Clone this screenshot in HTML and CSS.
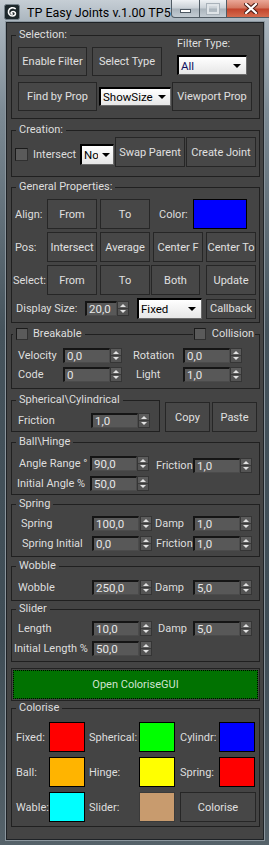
FILE: index.html
```html
<!DOCTYPE html>
<html lang="en">
<head>
  <meta charset="UTF-8">
  <meta name="viewport" content="width=device-width, initial-scale=1.0">
  <link rel="stylesheet" href="styles.css">
  <title>TP Easy Joints</title>
</head>
<body>
  <div class="window">
    <div class="titlebar">
      <svg class="app-icon" width="16" height="16" viewBox="0 0 16 16">
        <rect x="0.5" y="0.5" width="15" height="15" rx="2" fill="#1d282c" stroke="#77838c"/>
        <path d="M11.2 4.6 C9.4 3.2 5.4 3.4 4.6 6.6 C4 9.4 5.6 12 8.4 12 C10.8 12 12 10.2 11.2 8.6 C10.4 7.1 7.8 7 7.2 8.6 C6.8 9.6 7.6 10.2 8.4 10" fill="none" stroke="#fff" stroke-width="1.6" stroke-linecap="round"/>
      </svg>
      <span class="title">TP Easy Joints v.1.00 TP5</span>
      <div class="caption">
        <span class="cap cap-min"><i></i></span>
        <span class="cap cap-max"><i></i></span>
        <span class="cap cap-close">
          <svg width="14" height="11" viewBox="0 0 14 11">
            <path d="M2 1 L12 10 M12 1 L2 10" stroke="#4a1a12" stroke-width="4.2" stroke-linecap="square"/>
            <path d="M2 1 L12 10 M12 1 L2 10" stroke="#fff" stroke-width="2.2" stroke-linecap="square"/>
          </svg>
        </span>
      </div>
    </div>

    <div class="panel">
      <!-- Selection -->
      <div class="group sel">
        <span class="group-title">Selection:</span>
        <div class="row top">
          <button class="btn h29 w69">Enable Filter</button>
          <button class="btn h29 w70 ml5">Select Type</button>
          <div class="filter">
            <span class="filter-lbl">Filter Type:</span>
            <div class="dd dd-all">All</div>
          </div>
        </div>
        <div class="row mt6">
          <button class="btn h29 w79">Find by Prop</button>
          <div class="dd dd-show ml2">ShowSize</div>
          <button class="btn h29 w80 ml1">Viewport Prop</button>
        </div>
      </div>

      <!-- Creation -->
      <div class="group creation">
        <span class="group-title">Creation:</span>
        <div class="row">
          <span class="chk"></span>
          <span class="lbl w47 ml5">Intersect</span>
          <div class="dd dd-no"><span class="dd-text">No</span></div>
          <button class="btn w70 ml1">Swap Parent</button>
          <button class="btn w70 ml1">Create Joint</button>
        </div>
      </div>

      <!-- General Properties -->
      <div class="group general">
        <span class="group-title">General Properties:</span>
        <div class="row">
          <span class="rl">Align:</span>
          <button class="btn w50">From</button>
          <button class="btn w50 ml3">To</button>
          <span class="lbl w34 ml9">Color:</span>
          <span class="sw sw-color"></span>
        </div>
        <div class="row mt3">
          <span class="rl">Pos:</span>
          <button class="btn w50">Intersect</button>
          <button class="btn w50 ml3">Average</button>
          <button class="btn w50 ml3">Center F</button>
          <button class="btn w50 ml3">Center To</button>
        </div>
        <div class="row mt3">
          <span class="rl rl-sel">Select:</span>
          <button class="btn w50">From</button>
          <button class="btn w50 ml3">To</button>
          <button class="btn w49 ml1">Both</button>
          <button class="btn w50 ml6">Update</button>
        </div>
        <div class="row mt3 size-row">
          <span class="lbl size-lbl">Display Size:</span>
          <div class="spin spin-size"><span class="val">20,0</span><span class="arrows"></span></div>
          <div class="dd dd-fixed ml8">Fixed</div>
          <button class="btn btn-cb ml4">Callback</button>
        </div>
      </div>

      <!-- Breakable -->
      <div class="group breakable">
        <span class="group-title chk-title"><span class="chk"></span>Breakable</span>
        <span class="group-title right-title"><span class="chk"></span>Collision</span>
        <div class="row">
          <span class="lbl fl">Velocity</span>
          <div class="spin"><span class="val">0,0</span><span class="arrows"></span></div>
          <span class="lbl fr">Rotation</span>
          <div class="spin"><span class="val">0,0</span><span class="arrows"></span></div>
        </div>
        <div class="row mt4">
          <span class="lbl fl">Code</span>
          <div class="spin"><span class="val">0</span><span class="arrows"></span></div>
          <span class="lbl fr fr-light">Light</span>
          <div class="spin"><span class="val">1,0</span><span class="arrows"></span></div>
        </div>
      </div>

      <!-- Spherical\Cylindrical + copy/paste -->
      <div class="row top sph-row">
        <div class="group sph">
          <span class="group-title">Spherical\Cylindrical</span>
          <div class="row">
            <span class="lbl sph-lbl">Friction</span>
            <div class="spin"><span class="val">1,0</span><span class="arrows"></span></div>
          </div>
        </div>
        <button class="btn w45 ml5 mt2">Copy</button>
        <button class="btn w45 ml2 mt2">Paste</button>
      </div>

      <!-- Ball\Hinge -->
      <div class="group ball">
        <span class="group-title">Ball\Hinge</span>
        <div class="row top">
          <div class="col">
            <div class="row">
              <span class="lbl bl">Angle Range °</span>
              <div class="spin"><span class="val">90,0</span><span class="arrows"></span></div>
            </div>
            <div class="row mt5">
              <span class="lbl bl bl2">Initial Angle %</span>
              <div class="spin"><span class="val">50,0</span><span class="arrows"></span></div>
            </div>
          </div>
          <div class="row mt2 ml7">
            <span class="lbl w37">Friction</span>
            <div class="spin"><span class="val">1,0</span><span class="arrows"></span></div>
          </div>
        </div>
      </div>

      <!-- Spring -->
      <div class="group spring">
        <span class="group-title">Spring</span>
        <div class="row">
          <span class="lbl sl pl9">Spring</span>
          <div class="spin gap1"><span class="val">100,0</span><span class="arrows"></span></div>
          <span class="lbl sr">Damp</span>
          <div class="spin"><span class="val">1,0</span><span class="arrows"></span></div>
        </div>
        <div class="row mt5">
          <span class="lbl sl pl10">Spring Initial</span>
          <div class="spin gap1"><span class="val">0,0</span><span class="arrows"></span></div>
          <span class="lbl sr pl1">Friction</span>
          <div class="spin"><span class="val">1,0</span><span class="arrows"></span></div>
        </div>
      </div>

      <!-- Wobble -->
      <div class="group wobble">
        <span class="group-title">Wobble</span>
        <div class="row">
          <span class="lbl sl pl6">Wobble</span>
          <div class="spin gap1"><span class="val">250,0</span><span class="arrows"></span></div>
          <span class="lbl sr">Damp</span>
          <div class="spin"><span class="val">5,0</span><span class="arrows"></span></div>
        </div>
      </div>

      <!-- Slider -->
      <div class="group slider">
        <span class="group-title">Slider</span>
        <div class="row">
          <span class="lbl sl pl6">Length</span>
          <div class="spin gap1"><span class="val">10,0</span><span class="arrows"></span></div>
          <span class="lbl sr pl3">Damp</span>
          <div class="spin"><span class="val">5,0</span><span class="arrows"></span></div>
        </div>
        <div class="row mt5">
          <span class="lbl sl pl2">Initial Length %</span>
          <div class="spin gap1"><span class="val">50,0</span><span class="arrows"></span></div>
        </div>
      </div>

      <div class="gui">
        <button class="gui-btn">Open ColoriseGUI</button>
      </div>

      <!-- Colorise -->
      <div class="group colorise">
        <span class="group-title">Colorise</span>
        <div class="row">
          <span class="lbl cl">Fixed:</span>
          <span class="sw red"></span>
          <span class="lbl w50 ml4">Spherical:</span>
          <span class="sw green"></span>
          <span class="lbl w39 ml5">Cylindr:</span>
          <span class="sw blue"></span>
        </div>
        <div class="row mt5">
          <span class="lbl cl">Ball:</span>
          <span class="sw orange"></span>
          <span class="lbl w50 ml4">Hinge:</span>
          <span class="sw yellow"></span>
          <span class="lbl w39 ml5">Spring:</span>
          <span class="sw red"></span>
        </div>
        <div class="row mt5">
          <span class="lbl cl">Wable:</span>
          <span class="sw cyan"></span>
          <span class="lbl w50 ml4">Slider:</span>
          <span class="sw tan"></span>
          <button class="btn w76 ml5">Colorise</button>
        </div>
      </div>
    </div>
  </div>
</body>
</html>
```

FILE: styles.css
```css
body {
  margin: 0;
  font-family: Roboto, "Liberation Sans", sans-serif;
  font-size: 11px;
  color: #dedede;
  background: #3b4a53;
}

.window {
  width: 269px;
  height: 845px;
  overflow: hidden;
  background: linear-gradient(to bottom, #c6ced5 0, #aab5be 22px, #7d8b95 110px, #45535c 330px, #3f4d56 640px, #55626a 845px);
}

/* title bar */
.titlebar {
  height: 22px;
  display: flex;
  align-items: flex-start;
}

.app-icon {
  margin: 4px 0 0 4px;
  flex: none;
}

.title {
  margin: 5px 0 0 7px;
  font-size: 12.5px;
  line-height: 15px;
  color: #000;
  white-space: nowrap;
}

.caption {
  margin-left: auto;
  margin-right: 3px;
  display: flex;
}

.cap {
  height: 18px;
  box-sizing: border-box;
  display: flex;
  align-items: center;
  justify-content: center;
  border: 1px solid #515c65;
  border-top: none;
}

.cap-min,
.cap-max {
  background: linear-gradient(#eef1f4, #c9d0d6 48%, #aab4bc 52%, #c4ccd3);
}

.cap-min {
  width: 29px;
  border-radius: 0 0 0 4px;
}

.cap-min i {
  width: 9px;
  height: 2px;
  margin-top: 4px;
  background: #fff;
  border: 1px solid #4d5862;
}

.cap-max {
  width: 27px;
  border-left: none;
}

.cap-max i {
  width: 8px;
  height: 6px;
  border: 2px solid #dfe4e8;
  outline: 1px solid #a9b2ba;
}

.cap-close {
  width: 49px;
  border-left: none;
  border-radius: 0 0 4px 0;
  background: linear-gradient(#eaa898, #d3765f 48%, #c2432b 52%, #d56b4d);
}

/* main panel */
.panel {
  margin: 0 5px 0 6px;
  height: 818px;
  box-sizing: border-box;
  background: #444;
  border: 1px solid #1e2226;
  box-shadow: 0 0 0 1px #8b969e;
  padding: 0 2px 0 4px;
}

.group {
  position: relative;
  width: 249px;
  box-sizing: border-box;
  border: 1px solid #202020;
}

.group-title {
  position: absolute;
  top: -8px;
  left: 4px;
  padding: 0 3px;
  line-height: 14px;
  background: #444;
  white-space: nowrap;
}

.row {
  display: flex;
  align-items: center;
}

.row.top {
  align-items: flex-start;
}

.col {
  display: flex;
  flex-direction: column;
}

.lbl {
  box-sizing: border-box;
  white-space: nowrap;
  flex: none;
}

/* buttons */
.btn {
  box-sizing: border-box;
  height: 30px;
  padding: 0;
  flex: none;
  border: 1px solid #262626;
  background: #474747;
  color: #e0e0e0;
  font: inherit;
  white-space: nowrap;
}

.h29 { height: 29px; }
.w37 { width: 37px; }
.w39 { width: 39px; }
.w34 { width: 34px; }
.w45 { width: 45px; }
.w47 { width: 47px; }
.w49 { width: 49px; }
.w50 { width: 50px; }
.w69 { width: 69px; }
.w70 { width: 70px; }
.w76 { width: 76px; }
.w79 { width: 79px; }
.w80 { width: 80px; }
.ml1 { margin-left: 1px; }
.ml2 { margin-left: 2px; }
.ml3 { margin-left: 3px; }
.ml4 { margin-left: 4px; }
.ml5 { margin-left: 5px; }
.ml6 { margin-left: 6px; }
.ml7 { margin-left: 7px; }
.ml8 { margin-left: 8px; }
.ml9 { margin-left: 9px; }
.mt2 { margin-top: 2px; }
.mt3 { margin-top: 3px; }
.mt4 { margin-top: 4px; }
.mt5 { margin-top: 5px; }
.mt6 { margin-top: 6px; }
.pl1 { padding-left: 1px; }
.pl2 { padding-left: 2px; }
.pl3 { padding-left: 3px; }
.pl6 { padding-left: 6px; }
.pl9 { padding-left: 9px; }
.pl10 { padding-left: 10px; }

/* dropdowns */
.dd {
  box-sizing: border-box;
  display: flex;
  align-items: center;
  justify-content: space-between;
  flex: none;
  padding: 0 5px 0 2px;
  background: linear-gradient(#ffffff, #e6e6e6);
  border-top: 2px solid #000;
  border-left: 2px solid #000;
  border-right: 1px solid #6a6a6a;
  border-bottom: 1px solid #6a6a6a;
  color: #000;
  font-size: 11.5px;
  overflow: hidden;
}

.dd::after {
  content: "";
  flex: none;
  border: 4px solid transparent;
  border-top: 4px solid #000;
  border-bottom: 0;
}

.dd-all {
  width: 70px;
  height: 20px;
  margin-top: 5px;
  color: #101060;
}

.dd-show {
  width: 72px;
  height: 19px;
  padding-right: 4px;
}

.dd-no {
  width: 34px;
  height: 21px;
  padding-right: 3px;
}

.dd-no .dd-text {
  width: 14px;
  overflow: hidden;
}

.dd-fixed {
  width: 65px;
  height: 21px;
}

/* checkbox */
.chk {
  width: 13px;
  height: 13px;
  flex: none;
  box-sizing: border-box;
  background: #5a5a5a;
  border: 1px solid #303030;
  border-top-color: #1a1a1a;
  border-left-color: #1a1a1a;
}

/* spinner */
.spin {
  display: flex;
  height: 15px;
  flex: none;
}

.spin .val {
  width: 47px;
  height: 15px;
  box-sizing: border-box;
  padding-left: 2px;
  line-height: 12px;
  font-size: 11.5px;
  background: #585858;
  border-top: 2px solid #151515;
  border-left: 2px solid #151515;
  border-right: 1px solid #4b4b4b;
  border-bottom: 1px solid #4b4b4b;
  color: #e6e6e6;
}

.spin .arrows {
  width: 12px;
  height: 15px;
  box-sizing: border-box;
  display: flex;
  flex-direction: column;
  align-items: center;
  justify-content: space-evenly;
  background: linear-gradient(#5c5c5c 0, #5c5c5c 46%, #3a3a3a 46%, #3a3a3a 54%, #545454 54%);
  border: 1px solid #353535;
}

.spin .arrows::before {
  content: "";
  border: 3px solid transparent;
  border-bottom: 3px solid #e2e2e2;
  border-top: 0;
}

.spin .arrows::after {
  content: "";
  border: 3px solid transparent;
  border-top: 3px solid #e2e2e2;
  border-bottom: 0;
}

.spin.gap1 .arrows {
  margin-left: 1px;
}

/* colour swatches */
.sw {
  width: 36px;
  height: 30px;
  flex: none;
  box-sizing: border-box;
  border: 1px solid #000;
}

.sw-color { width: 54px; background: #0000ff; }
.red { background: #ff0000; }
.green { background: #00ff00; }
.blue { background: #0000ff; }
.orange { background: #ffb400; }
.yellow { background: #ffff00; }
.cyan { background: #00ffff; }
.tan { background: #c89b6e; border-color: #3a3a3a; }

/* Selection */
.sel {
  height: 84px;
  margin-top: 12px;
  padding: 11px 0 0 6px;
}

.filter {
  margin: -9px 0 0 15px;
  display: flex;
  flex-direction: column;
}

.filter-lbl {
  line-height: 12px;
}

/* Creation */
.creation {
  height: 47px;
  margin-top: 11px;
  padding: 6px 0 0 3px;
}

.creation .chk,
.creation .lbl,
.creation .dd {
  margin-top: 5px;
}

/* General Properties */
.general {
  height: 136px;
  margin-top: 10px;
  padding-top: 11px;
}

.rl {
  width: 35px;
  padding-left: 3px;
  box-sizing: border-box;
  flex: none;
}

.rl-sel {
  padding-left: 1px;
}

.size-row {
  height: 21px;
}

.size-lbl {
  width: 73px;
  padding-left: 4px;
}

.spin-size .val {
  width: 32px;
}

.btn-cb {
  width: 50px;
  height: 20px;
}

/* Breakable */
.breakable {
  height: 55px;
  margin-top: 11px;
  padding-top: 13px;
}

.chk-title {
  left: 1px;
  display: flex;
  align-items: center;
  gap: 5px;
}

.right-title {
  left: auto;
  right: 4px;
  padding: 0 1px;
  display: flex;
  align-items: center;
  gap: 6px;
}

.chk-title .chk,
.right-title .chk {
  width: 12px;
  height: 12px;
}

.fl {
  width: 51px;
  padding-left: 6px;
}

.fr {
  width: 50px;
  margin-left: 11px;
}

.fr-light {
  padding-left: 3px;
}

/* Spherical */
.sph-row {
  margin-top: 11px;
}

.sph {
  width: 149px;
  height: 32px;
  padding-top: 12px;
}

.sph-lbl {
  width: 79px;
  padding-left: 6px;
}

/* Ball\Hinge */
.ball {
  height: 53px;
  margin-top: 10px;
  padding-top: 13px;
}

.bl {
  width: 78px;
  padding-left: 7px;
}

.bl2 {
  padding-left: 5px;
}

/* Spring / Wobble / Slider */
.spring {
  height: 53px;
  margin-top: 9px;
  padding-top: 11px;
}

.wobble {
  height: 35px;
  margin-top: 9px;
  padding-top: 13px;
}

.slider {
  height: 53px;
  margin-top: 8px;
  padding-top: 11px;
}

.sl {
  width: 80px;
}

.sr {
  width: 38px;
  margin-left: 3px;
}

/* big green button */
.gui {
  width: 249px;
  height: 33px;
  margin-top: 6px;
  box-sizing: border-box;
  border: 1px solid #222;
  padding: 1px;
}

.gui-btn {
  width: 100%;
  height: 100%;
  padding: 0;
  background: #017201;
  border: 1px dotted #000;
  color: #cfe3cf;
  font: inherit;
}

/* Colorise */
.colorise {
  height: 119px;
  margin-top: 7px;
  padding-top: 13px;
}

.cl {
  width: 37px;
  padding-left: 4px;
}
```
